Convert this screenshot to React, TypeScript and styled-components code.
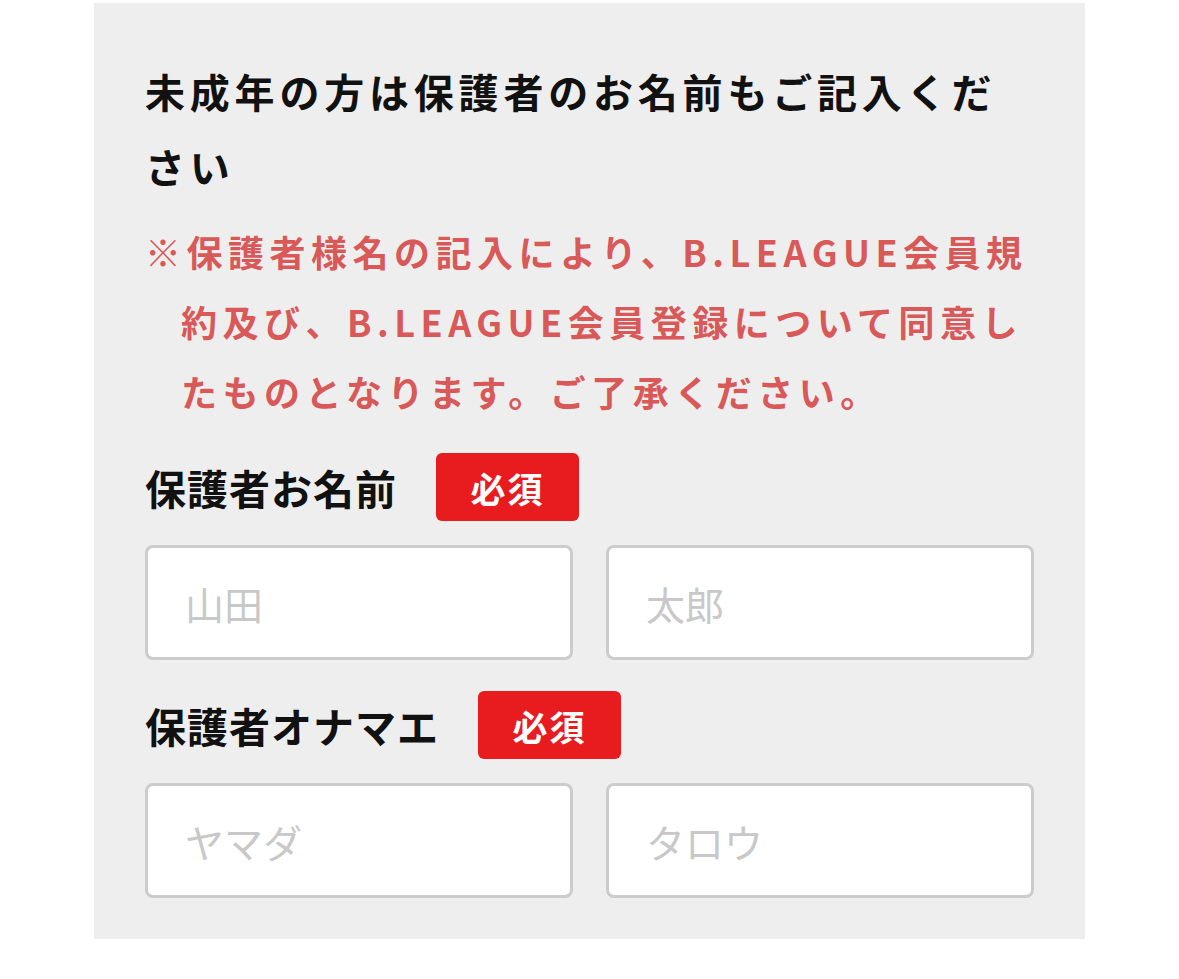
import React from "react";
import styled, { createGlobalStyle } from "styled-components";

const GlobalStyle = createGlobalStyle`
  html, body {
    margin: 0;
    padding: 0;
    background: #ffffff;
  }
  body {
    font-family: "Noto Sans CJK JP", "Noto Sans", sans-serif;
  }
`;

const Panel = styled.section`
  box-sizing: border-box;
  width: 991px;
  margin: 3px 0 0 94px;
  padding: 51px 51px 41px;
  background: #eeeeee;
`;

const Title = styled.h2`
  margin: 0;
  font-size: 40px;
  font-weight: 700;
  line-height: 75px;
  letter-spacing: 4.8px;
  color: #111111;
`;

const Note = styled.p`
  margin: 12px 0 0;
  padding-left: 36px;
  text-indent: -36px;
  font-size: 36px;
  font-weight: 700;
  line-height: 70px;
  letter-spacing: 5.5px;
  color: #d95858;
  white-space: nowrap;
`;

const Group = styled.div<{ $first?: boolean }>`
  display: flex;
  flex-direction: column;
  gap: 24px;
  margin-top: ${(p) => (p.$first ? "27px" : "31px")};
`;

const LabelRow = styled.div`
  display: flex;
  align-items: center;
  gap: 39px;
`;

const Label = styled.span`
  font-size: 41px;
  font-weight: 700;
  line-height: 1;
  letter-spacing: 1px;
  color: #111111;
`;

const Required = styled.span`
  display: inline-flex;
  align-items: center;
  justify-content: center;
  width: 143px;
  height: 68px;
  border-radius: 6px;
  background: #e81b1e;
  color: #ffffff;
  font-size: 35px;
  font-weight: 700;
  letter-spacing: 2px;
`;

const Fields = styled.div`
  display: grid;
  grid-template-columns: 1fr 1fr;
  gap: 33px;
`;

const Field = styled.input`
  box-sizing: border-box;
  width: 100%;
  height: 115px;
  padding: 0 0 0 37px;
  border: 3px solid #cccccc;
  border-radius: 8px;
  background: #ffffff;
  font-family: "Noto Sans CJK JP", "Noto Sans", sans-serif;
  font-size: 39px;
  font-weight: 400;
  color: #222222;
  outline: none;

  &::placeholder {
    color: #c8c8c8;
  }
`;

type NameGroupProps = {
  label: string;
  first?: boolean;
  placeholders: [string, string];
};

const NameGroup = ({ label, first, placeholders }: NameGroupProps) => (
  <Group $first={first}>
    <LabelRow>
      <Label>{label}</Label>
      <Required>必須</Required>
    </LabelRow>
    <Fields>
      <Field type="text" placeholder={placeholders[0]} />
      <Field type="text" placeholder={placeholders[1]} />
    </Fields>
  </Group>
);

export default function App() {
  return (
    <>
      <GlobalStyle />
      <Panel>
        <Title>未成年の方は保護者のお名前もご記入ください</Title>
        <Note>
          ※保護者様名の記入により、B.LEAGUE会員規
          <br />
          約及び、B.LEAGUE会員登録について同意し
          <br />
          たものとなります。ご了承ください。
        </Note>
        <NameGroup first label="保護者お名前" placeholders={["山田", "太郎"]} />
        <NameGroup label="保護者オナマエ" placeholders={["ヤマダ", "タロウ"]} />
      </Panel>
    </>
  );
}
